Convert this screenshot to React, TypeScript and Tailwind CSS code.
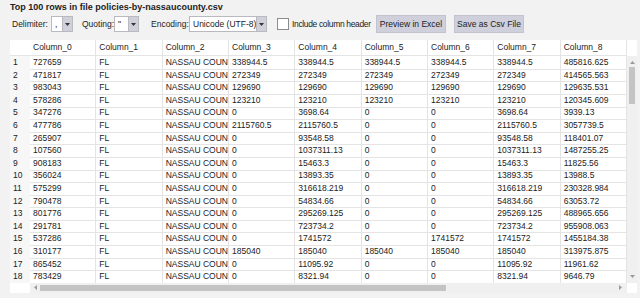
import React from 'react';

const rows: string[][] = [
  ['727659', 'FL', 'NASSAU COUNTY', '338944.5', '338944.5', '338944.5', '338944.5', '338944.5', '485816.625'],
  ['471817', 'FL', 'NASSAU COUNTY', '272349', '272349', '272349', '272349', '272349', '414565.563'],
  ['983043', 'FL', 'NASSAU COUNTY', '129690', '129690', '129690', '129690', '129690', '129635.531'],
  ['578286', 'FL', 'NASSAU COUNTY', '123210', '123210', '123210', '123210', '123210', '120345.609'],
  ['347276', 'FL', 'NASSAU COUNTY', '0', '3698.64', '0', '0', '3698.64', '3939.13'],
  ['477786', 'FL', 'NASSAU COUNTY', '2115760.5', '2115760.5', '0', '0', '2115760.5', '3057739.5'],
  ['265907', 'FL', 'NASSAU COUNTY', '0', '93548.58', '0', '0', '93548.58', '118401.07'],
  ['107560', 'FL', 'NASSAU COUNTY', '0', '1037311.13', '0', '0', '1037311.13', '1487255.25'],
  ['908183', 'FL', 'NASSAU COUNTY', '0', '15463.3', '0', '0', '15463.3', '11825.56'],
  ['356024', 'FL', 'NASSAU COUNTY', '0', '13893.35', '0', '0', '13893.35', '13988.5'],
  ['575299', 'FL', 'NASSAU COUNTY', '0', '316618.219', '0', '0', '316618.219', '230328.984'],
  ['790478', 'FL', 'NASSAU COUNTY', '0', '54834.66', '0', '0', '54834.66', '63053.72'],
  ['801776', 'FL', 'NASSAU COUNTY', '0', '295269.125', '0', '0', '295269.125', '488965.656'],
  ['291781', 'FL', 'NASSAU COUNTY', '0', '723734.2', '0', '0', '723734.2', '955908.063'],
  ['537286', 'FL', 'NASSAU COUNTY', '0', '1741572', '0', '1741572', '1741572', '1455184.38'],
  ['310177', 'FL', 'NASSAU COUNTY', '185040', '185040', '185040', '185040', '185040', '313975.875'],
  ['865452', 'FL', 'NASSAU COUNTY', '0', '11095.92', '0', '0', '11095.92', '11961.62'],
  ['783429', 'FL', 'NASSAU COUNTY', '0', '8321.94', '0', '0', '8321.94', '9646.79'],
];

const columns = Array.from({ length: 9 }, (_, i) => `Column_${i}`);

function Combo({ value, width }: { value: string; width: string }) {
  return (
    <div className={`flex h-[16px] ${width} border border-[#b9b9bf] bg-white`}>
      <div className="flex-1 pl-[3px] flex items-center overflow-hidden whitespace-nowrap">{value}</div>
      <div className="w-[10px] bg-[#cfd0d9] border-l border-[#b9b9bf] flex items-center justify-center">
        <svg width="5" height="3" viewBox="0 0 5 3">
          <path d="M0 0h5L2.5 3z" fill="#333" />
        </svg>
      </div>
    </div>
  );
}

export default function App() {
  return (
    <div className="w-[640px] h-[298px] overflow-hidden bg-[#f2f2f2] text-[#222] text-[8.5px] font-['Liberation_Sans',sans-serif]">
      <div className="pl-[10px] pt-[2px] h-[13px] font-bold text-[9px] leading-[11px]">
        Top 100 rows in file policies-by-nassaucounty.csv
      </div>

      <div className="flex items-center h-[22px] pl-[12px] whitespace-nowrap">
        <span className="w-[39px]">Delimiter:</span>
        <Combo value="," width="w-[22px]" />
        <span className="ml-[9px] w-[32px]">Quoting:</span>
        <Combo value={'"'} width="w-[25px]" />
        <span className="ml-[12px] w-[38px]">Encoding:</span>
        <Combo value="Unicode (UTF-8)" width="w-[78px]" />
        <div className="ml-[10px] w-[12px] h-[12px] border border-[#8c8c8c] bg-white" />
        <span className="ml-[3px] w-[84px] tracking-[-0.35px]">Include column header</span>
        <button className="w-[70px] h-[18px] bg-[#cfd0db] border border-[#c3c4cf]">Preview in Excel</button>
        <button className="ml-[8px] w-[70px] h-[18px] bg-[#cfd0db] border border-[#c3c4cf]">Save as Csv File</button>
      </div>

      <div className="ml-[10px] mt-[5px] w-[627px] bg-white">
        {/* header */}
        <div className="grid grid-cols-[20px_repeat(9,minmax(0,1fr))_10px] h-[16px]">
          <div className="border-b border-[#e4e4e4]" />
          {columns.map((c) => (
            <div key={c} className="pl-[3px] flex items-center border-r border-b border-[#e4e4e4] whitespace-nowrap overflow-hidden">
              {c}
            </div>
          ))}
          <div />
        </div>

        {/* body */}
        <div className="flex">
          <div className="flex-1 min-w-0">
            {rows.map((r, i) => (
              <div key={i} className="grid grid-cols-[20px_repeat(9,minmax(0,1fr))] h-[12.6px]">
                <div className="pl-[3px] flex items-center bg-[#f7f7f7] border-b border-[#ececec]">{i + 1}</div>
                {r.map((v, j) => (
                  <div key={j} className="pl-[3px] flex items-center border-r border-b border-[#e4e4e4] whitespace-nowrap overflow-hidden">
                    {v}
                  </div>
                ))}
              </div>
            ))}
          </div>
          <div className="w-[10px] bg-[#f0f0f0] flex flex-col items-center">
            <svg className="mt-[5px]" width="5" height="3" viewBox="0 0 5 3">
              <path d="M0 3h5L2.5 0z" fill="#9a9a9a" />
            </svg>
            <div className="mt-[3px] w-[6px] h-[37px] bg-[#c4c4c4]" />
            <div className="flex-1" />
            <svg className="mb-[5px]" width="5" height="3" viewBox="0 0 5 3">
              <path d="M0 0h5L2.5 3z" fill="#9a9a9a" />
            </svg>
          </div>
        </div>

        {/* horizontal scrollbar */}
        <div className="flex h-[10px]">
          <div className="w-[20px] bg-white" />
          <div className="flex-1 bg-[#f0f0f0] flex items-center">
            <svg className="ml-[4px]" width="3" height="5" viewBox="0 0 3 5">
              <path d="M3 0v5L0 2.5z" fill="#9a9a9a" />
            </svg>
            <div className="ml-[3px] w-[406px] h-[6px] bg-[#c4c4c4]" />
            <div className="flex-1" />
            <svg className="mr-[5px]" width="3" height="5" viewBox="0 0 3 5">
              <path d="M0 0v5L3 2.5z" fill="#9a9a9a" />
            </svg>
          </div>
          <div className="w-[10px] bg-white" />
        </div>
      </div>
    </div>
  );
}
